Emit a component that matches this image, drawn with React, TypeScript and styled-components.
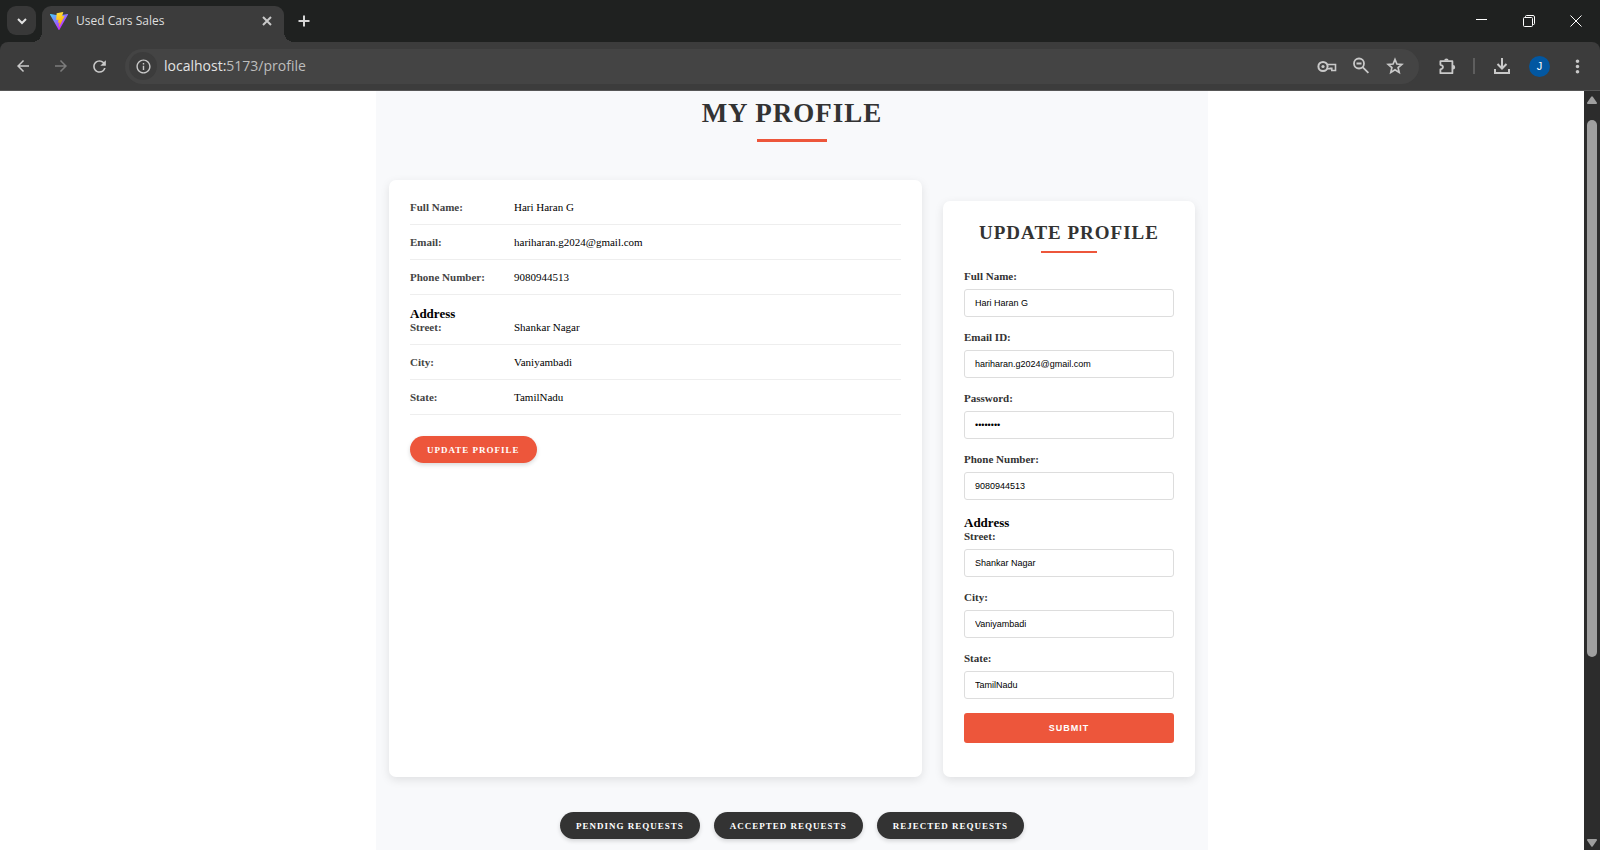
import React from "react";
import styled, { createGlobalStyle } from "styled-components";
import {
  MdArrowBack,
  MdArrowForward,
  MdRefresh,
  MdInfoOutline,
  MdMoreVert,
} from "react-icons/md";

const accent = "#ed563b";
const ink = "#333333";

const GlobalStyle = createGlobalStyle`
  *, *::before, *::after { box-sizing: border-box; }
  body { margin: 0; background: #ffffff; font-family: "Liberation Serif", "Times New Roman", serif; }
  h1, h2, h3, dl, dd { margin: 0; }
  button, input { margin: 0; }
`;

/* ---------- browser window ---------- */

const BrowserWindow = styled.div`
  display: flex;
  flex-direction: column;
  height: 100vh;
  overflow: hidden;
`;

const TabStrip = styled.header`
  display: flex;
  align-items: flex-end;
  flex: none;
  height: 42px;
  padding-left: 7px;
  background: #1f2120;
  color: #e3e3e3;
`;

const ChromeButton = styled.button<{ $size?: number; $dim?: boolean }>`
  display: flex;
  align-items: center;
  justify-content: center;
  flex: none;
  width: ${(p) => p.$size ?? 28}px;
  height: ${(p) => p.$size ?? 28}px;
  padding: 0;
  border: 0;
  border-radius: 50%;
  background: transparent;
  color: ${(p) => (p.$dim ? "#7c7c7c" : "#c9c9c9")};
`;

const TabSearchButton = styled(ChromeButton)`
  margin: 0 6px 7px 0;
  border-radius: 9px;
  background: #383838;
  color: #e3e3e3;
`;

const Tab = styled.div`
  position: relative;
  display: flex;
  align-items: center;
  width: 242px;
  height: 36px;
  padding: 0 7px 6px 8px;
  border-radius: 9px 9px 0 0;
  background: #3c3c3c;

  &::before,
  &::after {
    content: "";
    position: absolute;
    bottom: 0;
    width: 10px;
    height: 10px;
  }
  &::before {
    right: 100%;
    background: radial-gradient(circle at 0 0, transparent 10px, #3c3c3c 10px);
  }
  &::after {
    left: 100%;
    background: radial-gradient(circle at 100% 0, transparent 10px, #3c3c3c 10px);
  }
`;

const TabTitle = styled.span`
  flex: 1;
  margin-left: 8px;
  font: 12px/16px "Open Sans", "Noto Sans", sans-serif;
  color: #dedede;
`;

const NewTabButton = styled(ChromeButton)`
  margin: 0 0 7px 6px;
  color: #d6d6d6;
`;

const WindowControls = styled.div`
  display: flex;
  align-self: flex-start;
  margin-left: auto;
  padding-right: 1px;
`;

const WindowButton = styled.button`
  display: flex;
  align-items: center;
  justify-content: center;
  width: 47px;
  height: 41px;
  padding: 0;
  border: 0;
  background: transparent;
  color: #ffffff;
`;

const ToolbarBack = styled.div`
  flex: none;
  background: #1f2120;
`;

const Toolbar = styled.nav`
  display: flex;
  align-items: center;
  height: 49px;
  padding: 0 9px;
  border-bottom: 1px solid #565656;
  border-radius: 8px 8px 0 0;
  background: #3c3c3c;
`;

const NavButtons = styled.div`
  display: flex;
  gap: 10px;
`;

const AddressBar = styled.form`
  display: flex;
  align-items: center;
  flex: 1;
  height: 35px;
  margin: 0 14px 0 12px;
  padding: 0 10px 0 4px;
  border-radius: 18px;
  background: #444444;
`;

const SiteInfoButton = styled(ChromeButton)`
  background: #3c3c3c;
`;

const Url = styled.div`
  flex: 1;
  margin-left: 7px;
  font: 14px/20px "Open Sans", "Noto Sans", sans-serif;
  color: #bdbdbd;

  b {
    font-weight: 400;
    color: #e3e3e3;
  }
`;

const AddressActions = styled.div`
  display: flex;
  gap: 6px;
`;

const ToolbarActions = styled.div`
  display: flex;
  align-items: center;
`;

const ToolbarDivider = styled.span`
  width: 2px;
  height: 16px;
  margin: 0 13px 0 12px;
  background: #5e5e5e;
`;

const Avatar = styled.button`
  width: 21px;
  height: 21px;
  margin: 0 13px;
  padding: 0;
  border: 0;
  border-radius: 50%;
  background: #0257a1;
  color: #ffffff;
  font: 11px/21px "Liberation Sans", Arial, sans-serif;
`;

const Viewport = styled.div`
  display: flex;
  flex: 1;
  min-height: 0;
`;

const ScrollTrack = styled.div`
  display: flex;
  flex-direction: column;
  align-items: center;
  flex: none;
  width: 16px;
  padding: 5px 0 3px;
  background: #2c2c2c;
`;

const ScrollThumb = styled.div`
  flex: 0 1 537px;
  width: 10px;
  margin: 16px 0 auto;
  border-radius: 5px;
  background: #9f9f9f;
`;

/* ---------- profile page ---------- */

const Page = styled.main`
  flex: 1;
  overflow: hidden;
`;

const Container = styled.div`
  max-width: 832px;
  min-height: 100%;
  margin: 0 auto;
  padding: 6px 13px 12px;
  background: #f8f9fb;
`;

const PageTitle = styled.h1`
  font-size: 27px;
  line-height: 32px;
  letter-spacing: 1px;
  text-align: center;
  text-transform: uppercase;
  color: ${ink};

  &::after {
    content: "";
    display: block;
    width: 70px;
    height: 3px;
    margin: 10px auto 38px;
    background: ${accent};
  }
`;

const Columns = styled.div`
  display: grid;
  grid-template-columns: minmax(0, 1fr) 252px;
  gap: 21px;
`;

const Card = styled.section`
  padding: 21px;
  border-radius: 7px;
  background: #ffffff;
  box-shadow: 0 3px 10px rgba(0, 0, 0, 0.1);
`;

const DetailsCard = styled(Card)`
  padding-top: 10px;
`;

const UpdateCard = styled(Card)`
  margin-top: 21px;
  padding-bottom: 34px;
`;

const Details = styled.dl`
  margin-bottom: 21px;
`;

const DetailRow = styled.div<{ $compact?: boolean }>`
  display: flex;
  height: ${(p) => (p.$compact ? 24 : 35)}px;
  padding-top: ${(p) => (p.$compact ? 0 : 11)}px;
  border-bottom: 1px solid #eeeeee;
  font-size: 11px;
  line-height: 12px;
`;

const DetailName = styled.dt`
  width: 104px;
  font-weight: 700;
  color: #444444;
`;

const DetailValue = styled.dd`
  color: #000000;
`;

const AddressHeading = styled.h3`
  font-size: 13px;
  line-height: 15px;
  color: #000000;
`;

const DetailHeading = styled.div`
  padding-top: 11px;
`;

const PillButton = styled.button<{ $dark?: boolean }>`
  height: 27px;
  padding: 0 ${(p) => (p.$dark ? 16 : 17)}px;
  border: 0;
  border-radius: 14px;
  background: ${(p) => (p.$dark ? ink : accent)};
  box-shadow: 0 2px 4px rgba(0, 0, 0, 0.15);
  color: #ffffff;
  font: 700 9px/12px "Liberation Serif", "Times New Roman", serif;
  letter-spacing: 1px;
  text-transform: uppercase;
  white-space: nowrap;
`;

const CardTitle = styled.h2`
  font-size: 19px;
  line-height: 22px;
  letter-spacing: 1px;
  text-align: center;
  text-transform: uppercase;
  white-space: nowrap;
  color: ${ink};

  &::after {
    content: "";
    display: block;
    width: 56px;
    height: 2px;
    margin: 7px auto 17px;
    background: ${accent};
  }
`;

const Field = styled.label`
  display: block;
  margin-bottom: 14px;
  font-size: 11px;
  font-weight: 700;
  line-height: 12px;
  color: ${ink};
`;

const FieldInput = styled.input`
  display: block;
  width: 100%;
  height: 28px;
  margin-top: 7px;
  padding: 0 10px;
  border: 1px solid #dddddd;
  border-radius: 3px;
  background: #ffffff;
  color: #000000;
  font: 9px/12px "Liberation Sans", Arial, sans-serif;
`;

const FieldHeading = styled.div`
  margin-top: 15px;
`;

const SubmitButton = styled.button`
  display: block;
  width: 100%;
  height: 30px;
  border: 0;
  border-radius: 3px;
  background: ${accent};
  color: #ffffff;
  font: 700 9px/12px "Liberation Sans", Arial, sans-serif;
  letter-spacing: 1px;
  text-transform: uppercase;
`;

const RequestActions = styled.div`
  display: flex;
  justify-content: center;
  gap: 14px;
  margin-top: 35px;
`;

const details = [
  ["Full Name:", "Hari Haran G"],
  ["Email:", "hariharan.g2024@gmail.com"],
  ["Phone Number:", "9080944513"],
];

const addressDetails = [
  ["Street:", "Shankar Nagar"],
  ["City:", "Vaniyambadi"],
  ["State:", "TamilNadu"],
];

const accountFields = [
  ["Full Name:", "Hari Haran G", "text"],
  ["Email ID:", "hariharan.g2024@gmail.com", "email"],
  ["Password:", "password", "password"],
  ["Phone Number:", "9080944513", "tel"],
];

function ViteLogo() {
  return (
    <svg width="18" height="18" viewBox="0 0 256 257" preserveAspectRatio="none" aria-hidden="true">
      <defs>
        <linearGradient id="viteBody" x1="0" y1="0" x2="0.6" y2="0.8">
          <stop offset="0" stopColor="#41d1ff" />
          <stop offset="1" stopColor="#bd34fe" />
        </linearGradient>
        <linearGradient id="viteBolt" x1="0.4" y1="0" x2="0.6" y2="0.9">
          <stop offset="0" stopColor="#ffea83" />
          <stop offset="0.1" stopColor="#ffdd35" />
          <stop offset="1" stopColor="#ffa800" />
        </linearGradient>
      </defs>
      <path fill="url(#viteBody)" d="M255 38 134 254c-3 4-9 4-12 0L1 38c-3-5 1-11 7-10l120 21 120-21c6-1 10 5 7 10Z" />
      <path fill="url(#viteBolt)" d="M185 0 97 17c-2 0-3 2-3 3l-5 92c0 2 2 4 4 4l25-6c2 0 4 2 4 4l-8 36c0 3 2 5 4 4l15-4c3-1 5 1 4 4l-11 55c-1 4 3 5 5 2l75-151c1-2-1-4-3-4l-26 5c-3 0-4-2-4-4l17-59c1-3-1-5-5-4Z" />
    </svg>
  );
}

function LineIcon({ size = 20, width = 2, children }: { size?: number; width?: number; children: React.ReactNode }) {
  return (
    <svg width={size} height={size} viewBox={`0 0 ${size} ${size}`} fill="none" stroke="currentColor" strokeWidth={width} aria-hidden="true">
      {children}
    </svg>
  );
}

const ChevronIcon = () => (
  <LineIcon size={10}><path d="m1 3 4 4 4-4" /></LineIcon>
);

const CloseIcon = () => (
  <LineIcon size={10}><path d="m1 1 8 8M9 1 1 9" /></LineIcon>
);

const PlusIcon = () => (
  <LineIcon size={12}><path d="M6 0.500v11M0.500 6h11" /></LineIcon>
);

const KeyIcon = () => (
  <LineIcon>
    <circle cx="6" cy="10.500" r="4.600" />
    <path d="M10.200 8.500h8.300v6h-3.700v-2.300h-1.600v0.600h-3" strokeWidth="1.600" />
    <circle cx="6" cy="10.500" r="1.600" fill="currentColor" stroke="none" />
  </LineIcon>
);

const ZoomOutIcon = () => (
  <LineIcon>
    <circle cx="8" cy="7.500" r="5" strokeWidth="1.800" />
    <path d="m11.600 11.100 5.800 5.800M5.500 7.500h5" strokeWidth="1.800" />
  </LineIcon>
);

const StarIcon = () => (
  <LineIcon width={1.7}>
    <path d="m10 3.500 1.900 4.500 4.900.400-3.700 3.200 1.100 4.800-4.200-2.600-4.200 2.600 1.100-4.800-3.700-3.200 4.900-.4Z" />
  </LineIcon>
);

const PuzzleIcon = () => (
  <LineIcon width={1.8}>
    <path d="M3.400 5.200h12v12h-12v-3.800c3.400-.6 3.400-4 0-4.600Z" strokeLinejoin="round" />
    <path d="M7.200 4.600a2.200 2.200 0 0 1 4.400 0ZM16 9a2.200 2.200 0 0 1 0 4.400Z" fill="currentColor" stroke="none" />
  </LineIcon>
);

const DownloadIcon = () => (
  <LineIcon size={18}>
    <path d="M9 1v10M4.500 7 9 11.500 13.500 7M2 12v4h14v-4" />
  </LineIcon>
);

function App() {
  return (
    <>
      <GlobalStyle />
      <BrowserWindow>
        <TabStrip>
          <TabSearchButton $size={29} aria-label="Search tabs"><ChevronIcon /></TabSearchButton>
          <Tab>
            <ViteLogo />
            <TabTitle>Used Cars Sales</TabTitle>
            <ChromeButton $size={20} aria-label="Close tab"><CloseIcon /></ChromeButton>
          </Tab>
          <NewTabButton aria-label="New tab"><PlusIcon /></NewTabButton>
          <WindowControls>
            <WindowButton aria-label="Minimize">
              <svg width="11" height="11" viewBox="0 0 11 11" stroke="currentColor"><path d="M0 4.500h11" /></svg>
            </WindowButton>
            <WindowButton aria-label="Restore">
              <svg width="12" height="12" viewBox="0 0 12 12" fill="none" stroke="currentColor">
                <rect x="0.500" y="2.500" width="9" height="9" rx="1" />
                <path d="M2.500 2.500V1.500a1 1 0 0 1 1-1H10a1.500 1.500 0 0 1 1.500 1.500v6.500a1 1 0 0 1-1 1h-1" />
              </svg>
            </WindowButton>
            <WindowButton aria-label="Close">
              <svg width="12" height="12" viewBox="0 0 12 12" stroke="currentColor"><path d="m.5.500 11 11m0-11-11 11" /></svg>
            </WindowButton>
          </WindowControls>
        </TabStrip>

        <ToolbarBack>
          <Toolbar>
            <NavButtons>
              <ChromeButton aria-label="Back"><MdArrowBack size={18} /></ChromeButton>
              <ChromeButton $dim aria-label="Forward"><MdArrowForward size={18} /></ChromeButton>
              <ChromeButton aria-label="Reload"><MdRefresh size={19} /></ChromeButton>
            </NavButtons>
            <AddressBar onSubmit={(e) => e.preventDefault()}>
              <SiteInfoButton type="button" aria-label="Site information"><MdInfoOutline size={17} /></SiteInfoButton>
              <Url><b>localhost:</b>5173/profile</Url>
              <AddressActions>
                <ChromeButton type="button" aria-label="Passwords"><KeyIcon /></ChromeButton>
                <ChromeButton type="button" aria-label="Zoom"><ZoomOutIcon /></ChromeButton>
                <ChromeButton type="button" aria-label="Bookmark"><StarIcon /></ChromeButton>
              </AddressActions>
            </AddressBar>
            <ToolbarActions>
              <ChromeButton aria-label="Extensions"><PuzzleIcon /></ChromeButton>
              <ToolbarDivider />
              <ChromeButton aria-label="Downloads"><DownloadIcon /></ChromeButton>
              <Avatar aria-label="Account">J</Avatar>
              <ChromeButton aria-label="Menu"><MdMoreVert size={21} /></ChromeButton>
            </ToolbarActions>
          </Toolbar>
        </ToolbarBack>

        <Viewport>
          <Page>
            <Container>
              <PageTitle>My Profile</PageTitle>
              <Columns>
                <DetailsCard>
                  <Details>
                    {details.map(([name, value]) => (
                      <DetailRow key={name}>
                        <DetailName>{name}</DetailName>
                        <DetailValue>{value}</DetailValue>
                      </DetailRow>
                    ))}
                    <DetailHeading>
                      <AddressHeading>Address</AddressHeading>
                    </DetailHeading>
                    {addressDetails.map(([name, value], i) => (
                      <DetailRow key={name} $compact={i === 0}>
                        <DetailName>{name}</DetailName>
                        <DetailValue>{value}</DetailValue>
                      </DetailRow>
                    ))}
                  </Details>
                  <PillButton>Update Profile</PillButton>
                </DetailsCard>

                <UpdateCard>
                  <CardTitle>Update Profile</CardTitle>
                  <form onSubmit={(e) => e.preventDefault()}>
                    {accountFields.map(([label, value, type]) => (
                      <Field key={label}>
                        {label}
                        <FieldInput type={type} defaultValue={value} />
                      </Field>
                    ))}
                    <FieldHeading>
                      <AddressHeading>Address</AddressHeading>
                    </FieldHeading>
                    {addressDetails.map(([label, value]) => (
                      <Field key={label}>
                        {label}
                        <FieldInput defaultValue={value} />
                      </Field>
                    ))}
                    <SubmitButton type="submit">Submit</SubmitButton>
                  </form>
                </UpdateCard>
              </Columns>
              <RequestActions>
                <PillButton $dark>Pending Requests</PillButton>
                <PillButton $dark>Accepted Requests</PillButton>
                <PillButton $dark>Rejected Requests</PillButton>
              </RequestActions>
            </Container>
          </Page>
          <ScrollTrack aria-hidden="true">
            <svg width="10" height="8" viewBox="0 0 10 8" fill="#9f9f9f"><path d="M4.200.800a1 1 0 0 1 1.600 0L9.800 6.500a1 1 0 0 1-.8 1.500H1a1 1 0 0 1-.8-1.500Z" /></svg>
            <ScrollThumb />
            <svg width="10" height="8" viewBox="0 0 10 8" fill="#9f9f9f"><path d="M4.200 7.200a1 1 0 0 0 1.600 0L9.800 1.500A1 1 0 0 0 9 0H1a1 1 0 0 0-.8 1.500Z" /></svg>
          </ScrollTrack>
        </Viewport>
      </BrowserWindow>
    </>
  );
}

export default App;
